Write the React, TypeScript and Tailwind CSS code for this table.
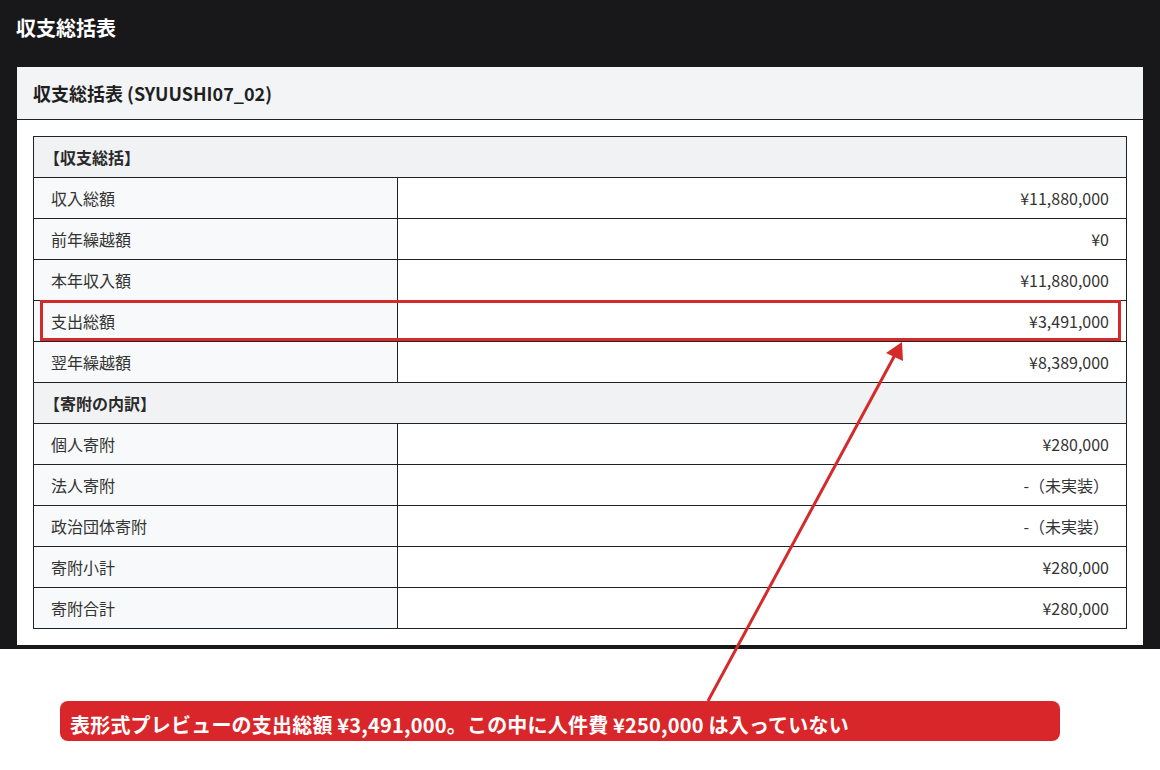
import React from 'react';

type Row =
  | { kind: 'section'; label: string }
  | { kind: 'item'; label: string; value: string };

const ROWS: Row[] = [
  { kind: 'section', label: '【収支総括】' },
  { kind: 'item', label: '収入総額', value: '¥11,880,000' },
  { kind: 'item', label: '前年繰越額', value: '¥0' },
  { kind: 'item', label: '本年収入額', value: '¥11,880,000' },
  { kind: 'item', label: '支出総額', value: '¥3,491,000' },
  { kind: 'item', label: '翌年繰越額', value: '¥8,389,000' },
  { kind: 'section', label: '【寄附の内訳】' },
  { kind: 'item', label: '個人寄附', value: '¥280,000' },
  { kind: 'item', label: '法人寄附', value: '-（未実装）' },
  { kind: 'item', label: '政治団体寄附', value: '-（未実装）' },
  { kind: 'item', label: '寄附小計', value: '¥280,000' },
  { kind: 'item', label: '寄附合計', value: '¥280,000' },
];

const font = { fontFamily: '"Noto Sans CJK JP", "Noto Sans", sans-serif' };

const App: React.FC = () => {
  return (
    <div className="relative w-[1160px] h-[770px] bg-white overflow-hidden" style={font}>
      {/* dark page area */}
      <div className="bg-[#18181a] px-[17px] pt-[14px] pb-[4px]">
        <h1 className="text-white text-[20px] leading-[28px] font-bold mb-[25px] -ml-[1px]">収支総括表</h1>

        <div className="bg-white">
          <div className="h-[53px] bg-[#f3f4f6] border-b border-[#222] flex items-center px-[16px]">
            <h2 className="text-[18px] font-bold text-[#1f1f1f]">収支総括表 (SYUUSHI07_02)</h2>
          </div>
          <div className="p-[16px]">
            <table className="w-full border-collapse border border-[#222] text-[16px] text-[#333]">
              <tbody>
                {ROWS.map((r, i) =>
                  r.kind === 'section' ? (
                    <tr key={i} className="h-[41px]">
                      <td colSpan={2} className="bg-[#f1f2f4] border border-[#222] pl-[10px] font-bold text-[#2a2a2a] leading-[20px]">
                        {r.label}
                      </td>
                    </tr>
                  ) : (
                    <tr key={i} className="h-[41px]">
                      <td className="w-[364px] bg-[#f8f9fa] border border-[#222] pl-[17px] leading-[20px]">{r.label}</td>
                      <td className="bg-white border border-[#222] pr-[17px] text-right leading-[20px]">{r.value}</td>
                    </tr>
                  )
                )}
              </tbody>
            </table>
          </div>
        </div>
      </div>

      {/* callout */}
      <div className="mt-[52px] ml-[60px] w-[1000px] h-[40px] rounded-[8px] bg-[#d9262a] flex items-center pt-[8px] pl-[10px]">
        <span className="text-white text-[20px] leading-[24px] font-bold tracking-[0.2px]">
          表形式プレビューの支出総額 ¥3,491,000。この中に人件費 ¥250,000 は入っていない
        </span>
      </div>

      {/* highlight box */}
      <div className="absolute left-[40px] top-[300px] w-[1081px] h-[41px] border-[3px] border-[#d42a2a] pointer-events-none" />

      {/* arrow */}
      <svg className="absolute left-0 top-0 pointer-events-none" width="1160" height="770">
        <line x1="708" y1="701" x2="896" y2="353" stroke="#d42a2a" strokeWidth="3" />
        <polygon points="902,342 886,353 903,361" fill="#d42a2a" />
      </svg>
    </div>
  );
};

export default App;
